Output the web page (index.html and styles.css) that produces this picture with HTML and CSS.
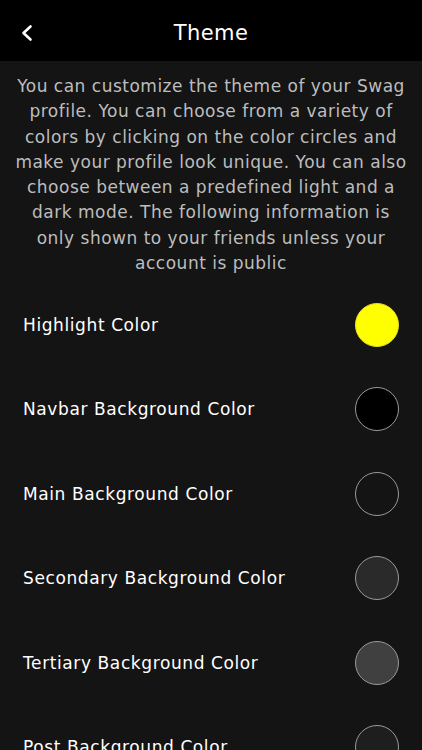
FILE: index.html
```html
<!DOCTYPE html>
<html>
<head>
<meta charset="utf-8">
<link rel="stylesheet" href="styles.css">
</head>
<body>
<header class="navbar">
  <button class="back" aria-label="Back">
    <svg width="14" height="18" viewBox="0 0 14 18"><path d="M10.5 2.5 L3.5 9 L10.5 15.5" fill="none" stroke="#fff" stroke-width="2.6" stroke-linecap="round" stroke-linejoin="round"/></svg>
  </button>
  <h1 class="title">Theme</h1>
</header>
<main class="content">
  <p class="desc">You can customize the theme of your Swag profile. You can choose from a variety of colors by clicking on the color circles and make your profile look unique. You can also choose between a predefined light and a dark mode. The following information is only shown to your friends unless your account is public</p>
  <ul class="rows">
    <li class="row"><span class="label">Highlight Color</span><span class="swatch swatch-highlight"></span></li>
    <li class="row"><span class="label">Navbar Background Color</span><span class="swatch swatch-navbar"></span></li>
    <li class="row"><span class="label">Main Background Color</span><span class="swatch swatch-main"></span></li>
    <li class="row"><span class="label">Secondary Background Color</span><span class="swatch swatch-secondary"></span></li>
    <li class="row"><span class="label">Tertiary Background Color</span><span class="swatch swatch-tertiary"></span></li>
    <li class="row"><span class="label">Post Background Color</span><span class="swatch swatch-post"></span></li>
  </ul>
</main>
</body>
</html>
```

FILE: styles.css
```css
html, body {
  margin: 0;
  padding: 0;
  background: #141414;
  height: 750px;
  overflow: hidden;
}
body {
  font-family: "DejaVu Sans", sans-serif;
  color: #fff;
}
.navbar {
  height: 61px;
  background: #000;
  display: flex;
  align-items: center;
  justify-content: center;
  position: relative;
}
.back {
  position: absolute;
  left: 20px;
  top: 24px;
  background: none;
  border: 0;
  padding: 0;
  width: 14px;
  height: 18px;
  display: flex;
}
.title {
  margin: 0 0 -4px;
  font-size: 21px;
  font-weight: normal;
  color: #fff;
  letter-spacing: 0.4px;
}
.content {
  padding: 0;
}
.desc {
  margin: 13px 0 0;
  padding: 0 12px;
  text-align: center;
  font-size: 17px;
  line-height: 25.3px;
  color: #bdbdbd;
  letter-spacing: 0.5px;
}
.rows {
  list-style: none;
  margin: 6px 0 0;
  padding: 0;
}
.row {
  height: 84.5px;
  display: flex;
  align-items: center;
  justify-content: space-between;
  padding: 0 23px 0 23px;
}
.label {
  font-size: 17px;
  letter-spacing: 0.6px;
}
.swatch {
  width: 44px;
  height: 44px;
  border-radius: 50%;
  box-sizing: border-box;
  border: 1.5px solid #9a9a9a;
}
.swatch-highlight { background: #ffff00; border-color: #e8e020; }
.swatch-navbar { background: #000; }
.swatch-main { background: #141414; }
.swatch-secondary { background: #2a2a2a; }
.swatch-tertiary { background: #404040; }
.swatch-post { background: #1e1e1e; }
```
